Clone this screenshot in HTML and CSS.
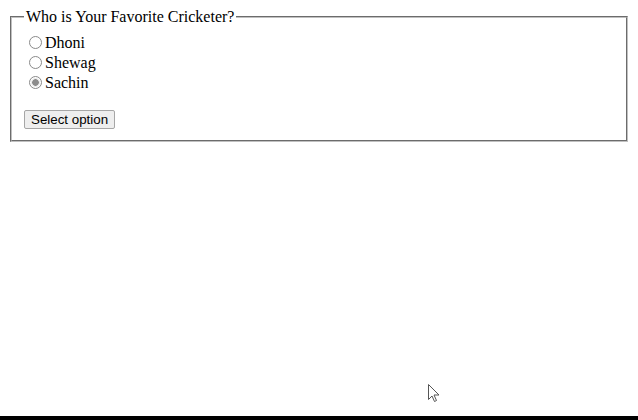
FILE: index.html
```html
<!DOCTYPE html>
<html>
<head>
<meta charset="utf-8">
<link rel="stylesheet" href="styles.css">
</head>
<body>
<form class="quiz">
  <fieldset class="box">
    <legend class="title">Who is Your Favorite Cricketer?</legend>
    <div class="row"><input type="radio" name="c" id="dhoni" class="opt"><label for="dhoni">Dhoni</label></div>
    <div class="row"><input type="radio" name="c" id="shewag" class="opt"><label for="shewag">Shewag</label></div>
    <div class="row"><input type="radio" name="c" id="sachin" class="opt" checked><label for="sachin">Sachin</label></div>
    <div class="actions"><button type="button" class="btn">Select option</button></div>
  </fieldset>
</form>
<svg class="cursor" width="12" height="19" viewBox="0 0 12 19"><path d="M0.5 0.5 L0.5 15.5 L4 12 L6.5 17.5 L8.5 16.5 L6 11 L11 11 Z" fill="#fff" stroke="#555" stroke-width="1"/></svg>
<div class="bottombar"></div>
</body>
</html>
```
FILE: styles.css
```css
html { background: #fff; }
body {
  margin: 8px;
  font-family: "Liberation Serif", "Times New Roman", serif;
  font-size: 16px;
  color: #000;
}
.quiz { margin: 0; }
.box {
  margin: 0 2px;
  border: 2px groove #c0c0c0;
  padding: 7px 0.75em 10px;
}
.title { padding: 0 2px; }
.row {
  height: 20px;
  line-height: 20px;
}
.actions {
  margin-top: 17px;
  height: 20px;
}
.opt {
  -webkit-appearance: none;
  appearance: none;
  box-sizing: border-box;
  width: 13px;
  height: 13px;
  margin: 0 3px 0 5px;
  border: 1px solid #8a8a8a;
  border-radius: 50%;
  background: #fff;
  vertical-align: -1px;
}
.opt:checked {
  background: radial-gradient(circle, #8c8c8c 0, #8c8c8c 3px, #e0e0e0 3.5px, #fff 5px);
}
.btn {
  font-family: "Liberation Sans", Arial, sans-serif;
  font-size: 13.333px;
  color: #000;
  background: #eeeeee;
  border: 1px solid #a6a6a6;
  border-radius: 2px;
  padding: 1px 6px;
  height: 19px;
  line-height: 15px;
}
.cursor {
  position: fixed;
  left: 428px;
  top: 384px;
}
.bottombar {
  position: fixed;
  left: 0;
  right: 0;
  bottom: 0;
  height: 4px;
  background: #000;
}
```
